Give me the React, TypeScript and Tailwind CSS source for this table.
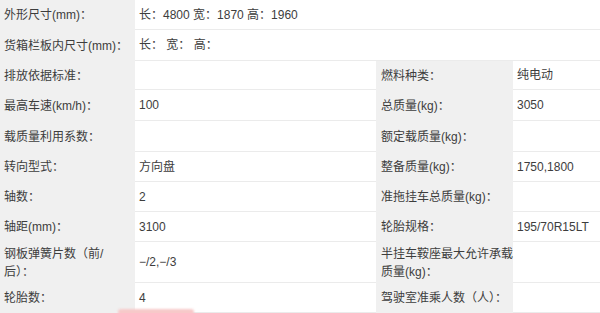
import React from "react";

type Row = {
  h: string;
  l1: React.ReactNode;
  v1: React.ReactNode;
  l2?: React.ReactNode;
  v2?: React.ReactNode;
  full?: boolean;
};

const rows: Row[] = [
  { h: "h-[30px]", l1: "外形尺寸(mm)：", v1: "长：4800 宽：1870 高：1960", full: true },
  { h: "h-[31px]", l1: "货箱栏板内尺寸(mm)：", v1: "长： 宽： 高：", full: true },
  { h: "h-[29px]", l1: "排放依据标准：", v1: "", l2: "燃料种类：", v2: "纯电动" },
  { h: "h-[31px]", l1: "最高车速(km/h)：", v1: "100", l2: "总质量(kg)：", v2: "3050" },
  { h: "h-[31px]", l1: "载质量利用系数：", v1: "", l2: "额定载质量(kg)：", v2: "" },
  { h: "h-[30px]", l1: "转向型式：", v1: "方向盘", l2: "整备质量(kg)：", v2: "1750,1800" },
  { h: "h-[30px]", l1: "轴数：", v1: "2", l2: "准拖挂车总质量(kg)：", v2: "" },
  { h: "h-[30px]", l1: "轴距(mm)：", v1: "3100", l2: "轮胎规格：", v2: "195/70R15LT" },
  {
    h: "h-[41px]",
    l1: (
      <>
        钢板弹簧片数（前/
        <br />
        后）：
      </>
    ),
    v1: "−/2,−/3",
    l2: (
      <>
        半挂车鞍座最大允许承载
        <br />
        质量(kg)：
      </>
    ),
    v2: "",
  },
  { h: "h-[30px]", l1: "轮胎数：", v1: "4", l2: "驾驶室准乘人数（人）：", v2: "" },
];

export default function App() {
  return (
    <div
      className="relative w-[600px] h-[313px] overflow-hidden bg-white text-[12px] leading-[18px] text-[#3d3d3d]"
      style={{ fontFamily: '"Liberation Sans", "Noto Sans CJK SC", sans-serif' }}
    >
      {rows.map((r, i) => (
        <div key={i} className={`flex ${r.h}`}>
          <div className="w-[135px] shrink-0 bg-[#f0f0f0] flex items-center pl-[4px] whitespace-nowrap">
            <span>{r.l1}</span>
          </div>
          {r.full ? (
            <div className="flex-1 border-b border-[#ebebeb] flex items-center pl-[4px] whitespace-pre">
              {r.v1}
            </div>
          ) : (
            <>
              <div className="w-[241px] shrink-0 border-b border-[#ebebeb] flex items-center pl-[4px]">
                {r.v1}
              </div>
              <div className="w-[137px] shrink-0 bg-[#f0f0f0] flex items-center pl-[5px] whitespace-nowrap">
                <span>{r.l2}</span>
              </div>
              <div className="flex-1 border-b border-[#ebebeb] flex items-center pl-[4px]">
                {r.v2}
              </div>
            </>
          )}
        </div>
      ))}
      <div className="absolute left-[118px] top-[309px] w-[76px] h-[6px] rounded-full bg-[#f7c9c9] blur-[1px]" />
    </div>
  );
}
